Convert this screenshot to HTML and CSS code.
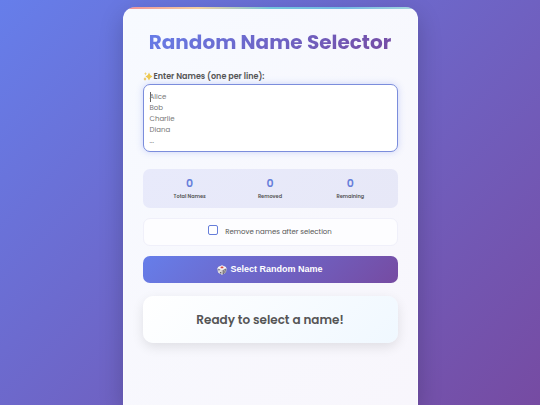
FILE: index.html
```html
<!DOCTYPE html>
<html lang="en">
<head>
  <meta charset="UTF-8">
  <meta name="viewport" content="width=device-width, initial-scale=1">
  <title>Random Name Selector</title>
  <link rel="stylesheet" href="styles.css">
</head>
<body>
  <main class="container">
    <h1 class="title">Random Name Selector</h1>

    <div class="input-section">
      <label class="input-label" for="names">
        <svg class="icon" viewBox="0 0 20 20" aria-hidden="true">
          <path fill="#edc84e" d="M12 1 Q13.500 7.500 19 9 Q13.500 10.500 12 17 Q10.500 10.500 5 9 Q10.500 7.500 12 1Z"/>
          <path fill="#f0d272" d="M5 0 Q5.500 3 8 3.500 Q5.500 4 5 7 Q4.500 4 2 3.500 Q4.500 3 5 0Z"/>
          <path fill="#e8bf4c" d="M4 10 Q4.500 13 7 14 Q4.500 15 4 18 Q3.500 15 1 14 Q3.500 13 4 10Z"/>
        </svg>
        Enter Names (one per line):
      </label>
      <textarea id="names" class="names-input" placeholder="Alice&#10;Bob&#10;Charlie&#10;Diana&#10;..."></textarea>
    </div>

    <div class="stats">
      <div class="stat">
        <div id="totalCount" class="stat-number">0</div>
        <div class="stat-label">Total Names</div>
      </div>
      <div class="stat">
        <div id="removedCount" class="stat-number">0</div>
        <div class="stat-label">Removed</div>
      </div>
      <div class="stat">
        <div id="remainingCount" class="stat-number">0</div>
        <div class="stat-label">Remaining</div>
      </div>
    </div>

    <div class="option">
      <input type="checkbox" id="removeAfter" class="option-check">
      <label class="option-label" for="removeAfter">Remove names after selection</label>
    </div>

    <button type="button" id="selectButton" class="select-button">
      <svg class="icon" viewBox="0 0 20 20" aria-hidden="true">
        <g stroke-width="2" stroke-linejoin="round">
          <path fill="#dedbdc" stroke="#dedbdc" d="M1.500 6 L10 9.500 V18.500 L3 15Z"/>
          <path fill="#c9c5c9" stroke="#c9c5c9" d="M18.500 6 L10 9.500 V18.500 L17 15Z"/>
          <path fill="#f7f5f5" stroke="#f7f5f5" d="M10 1.500 L18 5 L10 9 L2 5Z"/>
        </g>
        <ellipse cx="10" cy="4.800" rx="3" ry="1.800" fill="#d9463e"/>
        <g fill="#3b3740">
          <ellipse cx="4" cy="9.500" rx="1.200" ry="1.600"/>
          <ellipse cx="7.500" cy="15.500" rx="1.200" ry="1.600"/>
          <ellipse cx="12.500" cy="12" rx="1.200" ry="1.600"/>
          <ellipse cx="16.200" cy="9.800" rx="1.200" ry="1.600"/>
          <ellipse cx="12.500" cy="16.200" rx="1.200" ry="1.600"/>
          <ellipse cx="15.800" cy="14" rx="1.200" ry="1.600"/>
        </g>
      </svg>
      Select Random Name
    </button>

    <div id="result" class="result">Ready to select a name!</div>
  </main>
</body>
</html>
```
FILE: styles.css
```css
* {
  box-sizing: border-box;
}

html {
  height: 100%;
  overflow: hidden;
  background: linear-gradient(135deg, #667eea 0%, #764ba2 100%);
}

body {
  display: flex;
  justify-content: center;
  height: 100vh;
  margin: 0;
  padding: 7px 12px 0;
  font-family: Poppins, Inter, "Liberation Sans", sans-serif;
  color: #555;
}

.container {
  display: flex;
  flex-direction: column;
  flex: 1;
  max-width: 295px;
  padding: 17px 19px;
  border: 1px solid rgba(255, 255, 255, 0.5);
  border-width: 0 1px;
  border-radius: 12px 12px 0 0;
  background:
    linear-gradient(90deg, #f08f98, #f3cf9f 25%, #72c5dc 50%, #74b9e4 75%, #a6d8dc) top / 100% 2px no-repeat,
    linear-gradient(135deg, #f7faff, #f8f6fc);
  box-shadow: 0 8px 24px rgba(0, 0, 0, 0.2);
}

.title {
  align-self: center;
  margin: 0 0 10px;
  font-size: 20px;
  font-weight: 700;
  line-height: 36px;
  white-space: nowrap;
  color: transparent;
  background: linear-gradient(135deg, #667eea, #764ba2);
  -webkit-background-clip: text;
  background-clip: text;
}

.input-section {
  margin-bottom: 17px;
}

.icon {
  width: 10px;
  height: 10px;
  flex: none;
}

.input-label {
  display: flex;
  align-items: center;
  gap: 1px;
  font-size: 8px;
  font-weight: 600;
  line-height: 14px;
}

.names-input {
  display: block;
  width: 100%;
  height: 68px;
  padding: 6px;
  border: 1px solid #7b8ddc;
  border-radius: 7px;
  outline: none;
  resize: none;
  overflow: hidden;
  font: 400 7px/11px Poppins, Inter, "Liberation Sans", sans-serif;
  color: #444;
  /* text cursor on the first line */
  background: linear-gradient(#666, #666) 6px 7px / 1px 10px no-repeat #fff;
  box-shadow: 0 0 7px rgba(102, 126, 234, 0.3);
}

.names-input::placeholder {
  color: #777;
}

.stats {
  display: flex;
  justify-content: space-around;
  margin-bottom: 10px;
  padding: 7px 7px 5px;
  border-radius: 7px;
  background: linear-gradient(135deg, #e8eafb, #e7e8f7);
}

.stat {
  flex: 1;
  text-align: center;
}

.stat-number {
  font-size: 11px;
  font-weight: 600;
  line-height: 14px;
  color: #667eda;
}

.stat-label {
  font-size: 5px;
  font-weight: 600;
  line-height: 13px;
}

.option {
  display: flex;
  align-items: flex-start;
  justify-content: center;
  gap: 7px;
  margin-bottom: 10px;
  padding: 6px;
  border: 1px solid #f0f0fa;
  border-radius: 7px;
  background: #fdfdff;
}

.option-check {
  appearance: none;
  width: 10px;
  height: 10px;
  margin: 0;
  border: 1px solid #667eda;
  border-radius: 2px;
  background: #fff;
}

.option-check:checked {
  background: #667eea;
}

.option-label {
  font-size: 7px;
  line-height: 14px;
}

.select-button {
  display: flex;
  align-items: center;
  justify-content: center;
  gap: 3px;
  width: 100%;
  margin-bottom: 13px;
  padding: 7px;
  border: 0;
  border-radius: 7px;
  font: 700 9px/13px "Liberation Sans", Arial, sans-serif;
  color: #fff;
  background: linear-gradient(135deg, #667eea 0%, #764ba2 100%);
  cursor: pointer;
}

.result {
  padding: 12px;
  border-radius: 10px;
  font-size: 12px;
  font-weight: 600;
  line-height: 23px;
  text-align: center;
  background: linear-gradient(135deg, #fff, #f0f8ff);
  box-shadow: 0 4px 12px rgba(0, 0, 0, 0.1);
}
```
